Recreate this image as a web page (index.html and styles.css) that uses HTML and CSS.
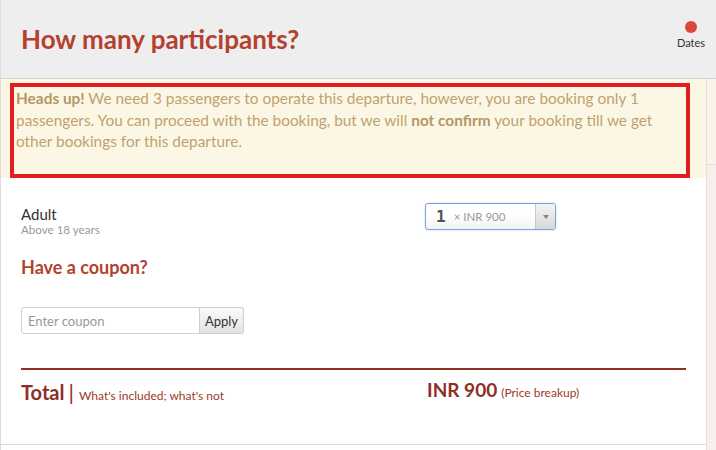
FILE: index.html
```html
<!DOCTYPE html>
<html>
<head>
<meta charset="utf-8">
<link rel="stylesheet" href="styles.css">
</head>
<body>
<div class="page">
  <div class="header">
    <h1 class="title">How many participants?</h1>
    <div class="step">
      <span class="dot"></span>
      <span class="step-label">Dates</span>
    </div>
  </div>
  <div class="content">
    <div class="main">
      <div class="alert">
        <p><b>Heads up!</b> We need 3 passengers to operate this departure, however, you are booking only 1 passengers. You can proceed with the booking, but we will <b>not confirm</b> your booking till we get other bookings for this departure.</p>
        <div class="annot"></div>
      </div>
      <div class="body">
        <div class="row">
          <div class="who">
            <div class="who-name">Adult</div>
            <div class="who-sub">Above 18 years</div>
          </div>
          <div class="select">
            <span class="sel-num">1</span>
            <span class="sel-price">× INR 900</span>
            <span class="sel-btn"><span class="tri"></span></span>
          </div>
        </div>
        <h2 class="coupon-title">Have a coupon?</h2>
        <div class="coupon">
          <input class="coupon-input" type="text" placeholder="Enter coupon">
          <button class="apply">Apply</button>
        </div>
        <div class="total">
          <div class="total-left">
            <span class="total-word">Total</span>
            <span class="bar">|</span>
            <span class="small-link">What's included; what's not</span>
          </div>
          <div class="total-right">
            <span class="amount">INR 900</span>
            <span class="small-link">(Price breakup)</span>
          </div>
        </div>
      </div>
    </div>
    <div class="side">
      <div class="side-top"></div>
    </div>
  </div>
</div>
</body>
</html>
```

FILE: styles.css
```css
* { box-sizing: border-box; }
html, body { margin: 0; padding: 0; background: #fff; }
body { font-family: Lato, "Open Sans", sans-serif; width: 716px; height: 450px; overflow: hidden; }
.page { display: flex; flex-direction: column; height: 450px; }
.header {
  height: 79px;
  background: #eeeeee;
  border-bottom: 1px solid #d8d5cc;
  border-left: 1px solid #dcdcdc;
  display: flex;
  justify-content: space-between;
  padding: 0 0 0 20px;
  flex-shrink: 0;
}
.title {
  margin: 0;
  padding-top: 23px;
  font-size: 26px;
  font-weight: 700;
  color: #b4412f;
  line-height: 32px;
}
.step {
  width: 36px;
  margin-right: 7px;
  display: flex;
  flex-direction: column;
  align-items: center;
  padding-top: 21px;
}
.dot { width: 12px; height: 12px; border-radius: 50%; background: #d9473a; }
.step-label { font-size: 11px; color: #333; margin-top: 3px; line-height: 14px; }
.content { display: flex; flex: 1; }
.main {
  width: 706px;
  border-left: 1px solid #dcdcdc;
  display: flex;
  flex-direction: column;
}
.alert {
  position: relative;
  background: #fcf7e4;
  height: 99px;
  padding: 9px 20px 0 15px;
}
.alert p {
  margin: 0;
  font-size: 15.4px;
  line-height: 21.5px;
  color: #bfa271;
}
.alert b { color: #b39766; }
.annot {
  position: absolute;
  left: 9px;
  top: 4px;
  width: 680px;
  height: 95px;
  border: 4px solid #e31b23;
}
.body { padding: 27px 20px 0 20px; flex: 1; border-bottom: 1px solid #dcdcdc; margin-bottom: 5px; }
.row { display: flex; justify-content: space-between; padding-right: 130px; }
.who-name { font-size: 15px; color: #333; line-height: 18px; }
.who-sub { font-size: 11.6px; color: #999; line-height: 13px; }
.select {
  width: 131px;
  height: 27px;
  margin-top: -2px;
  border: 1px solid #7fa4d4;
  border-radius: 3px;
  display: flex;
  align-items: center;
  padding-left: 10px;
  background: linear-gradient(#fff 40%, #f3f3f3);
  box-shadow: 0 0 2px rgba(90,140,210,0.4);
}
.sel-num { font-size: 16px; font-weight: 700; color: #555; font-family: "DejaVu Sans Mono", monospace; }
.sel-price { font-size: 11.5px; color: #999; margin-left: 8px; flex: 1; }
.sel-btn {
  width: 20px;
  height: 100%;
  border-left: 1px solid #c8c8c8;
  background: linear-gradient(#f4f4f4, #d9d9d9);
  display: flex;
  align-items: center;
  justify-content: center;
  border-radius: 0 2px 2px 0;
}
.tri { width: 0; height: 0; border-left: 3px solid transparent; border-right: 3px solid transparent; border-top: 4px solid #888; }
.coupon-title {
  margin: 20px 0 0 0;
  font-size: 18px;
  font-weight: 700;
  color: #b4412f;
  line-height: 22px;
}
.coupon { display: flex; margin-top: 29px; }
.coupon-input {
  width: 179px;
  height: 27px;
  border: 1px solid #cfcfcf;
  border-radius: 3px 0 0 3px;
  font-family: Lato, sans-serif;
  font-size: 13px;
  padding: 0 6px;
  color: #333;
}
.coupon-input::placeholder { color: #999; }
.apply {
  height: 27px;
  width: 44px;
  border: 1px solid #cfcfcf;
  border-left: none;
  border-radius: 0 3px 3px 0;
  background: linear-gradient(#fafafa, #e2e2e2);
  font-family: Lato, sans-serif;
  font-size: 13px;
  color: #333;
  padding: 0;
}
.total {
  margin-top: 34px;
  border-top: 2px solid #8f3023;
  display: flex;
  padding-top: 8px;
}
.total-left { width: 406px; display: flex; align-items: baseline; }
.total-word { font-size: 20px; font-weight: 700; color: #8e2d25; }
.bar { font-size: 22px; color: #8e2d25; margin: 0 5px 0 4px; }
.small-link { font-size: 12px; color: #9b3a2c; }
.total-right { display: flex; align-items: baseline; }
.amount { font-size: 19px; font-weight: 700; color: #8e2d25; margin-right: 4px; }
.side {
  width: 10px;
  background: #f7eeee;
  border-left: 1px solid #ecdcdc;
}
.side-top { height: 86px; border-bottom: 1px solid #e6e0e0; background: #f9f3ea; }
```
